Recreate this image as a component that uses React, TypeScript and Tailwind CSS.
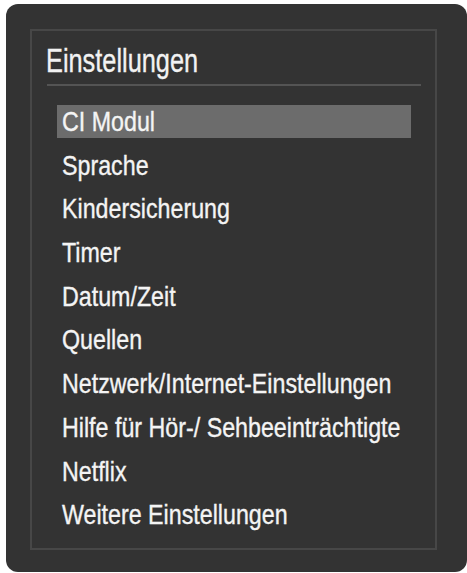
import React from "react";

const items = [
  "CI Modul",
  "Sprache",
  "Kindersicherung",
  "Timer",
  "Datum/Zeit",
  "Quellen",
  "Netzwerk/Internet-Einstellungen",
  "Hilfe für Hör-/ Sehbeeinträchtigte",
  "Netflix",
  "Weitere Einstellungen",
];

export default function App() {
  return (
    <div className="w-[467px] h-[573px] bg-white pt-[4px] pl-[6px] overflow-hidden" style={{ fontFamily: '"Liberation Sans", Arial, sans-serif' }}>
      <div className="w-[461px] h-[568px] rounded-[12px] bg-[#333333] pt-[25px] pl-[24px]">
        <div className="w-[407px] h-[521px] border-2 border-[#474747] flex flex-col">
          <div className="pt-[8.5px] pl-[14px] h-[48.5px] text-[34px] leading-[40px] text-[#f2f2f2] whitespace-nowrap [-webkit-text-stroke:0.35px_#f2f2f2]">
            <span className="inline-block origin-left scale-x-[0.745]">Einstellungen</span>
          </div>
          <div className="mt-[4.5px] ml-[15px] w-[374px] h-[2px] bg-[#545454]" />
          <div className="mt-[19px] ml-[25px] w-[354px] flex flex-col gap-[10.7px]">
            {items.map((t, i) => (
              <div
                key={t}
                className={
                  i === 0
                    ? "h-[33px] leading-[33px] pl-[5px] bg-[#6c6c6c] text-[28px] text-[#f4f4f4] whitespace-nowrap [-webkit-text-stroke:0.35px_#f4f4f4]"
                    : "h-[33px] leading-[33px] pl-[5px] text-[28px] text-[#f4f4f4] whitespace-nowrap [-webkit-text-stroke:0.35px_#f4f4f4]"
                }
              >
                <span className="inline-block origin-left scale-x-[0.83]">{t}</span>
              </div>
            ))}
          </div>
        </div>
      </div>
    </div>
  );
}
